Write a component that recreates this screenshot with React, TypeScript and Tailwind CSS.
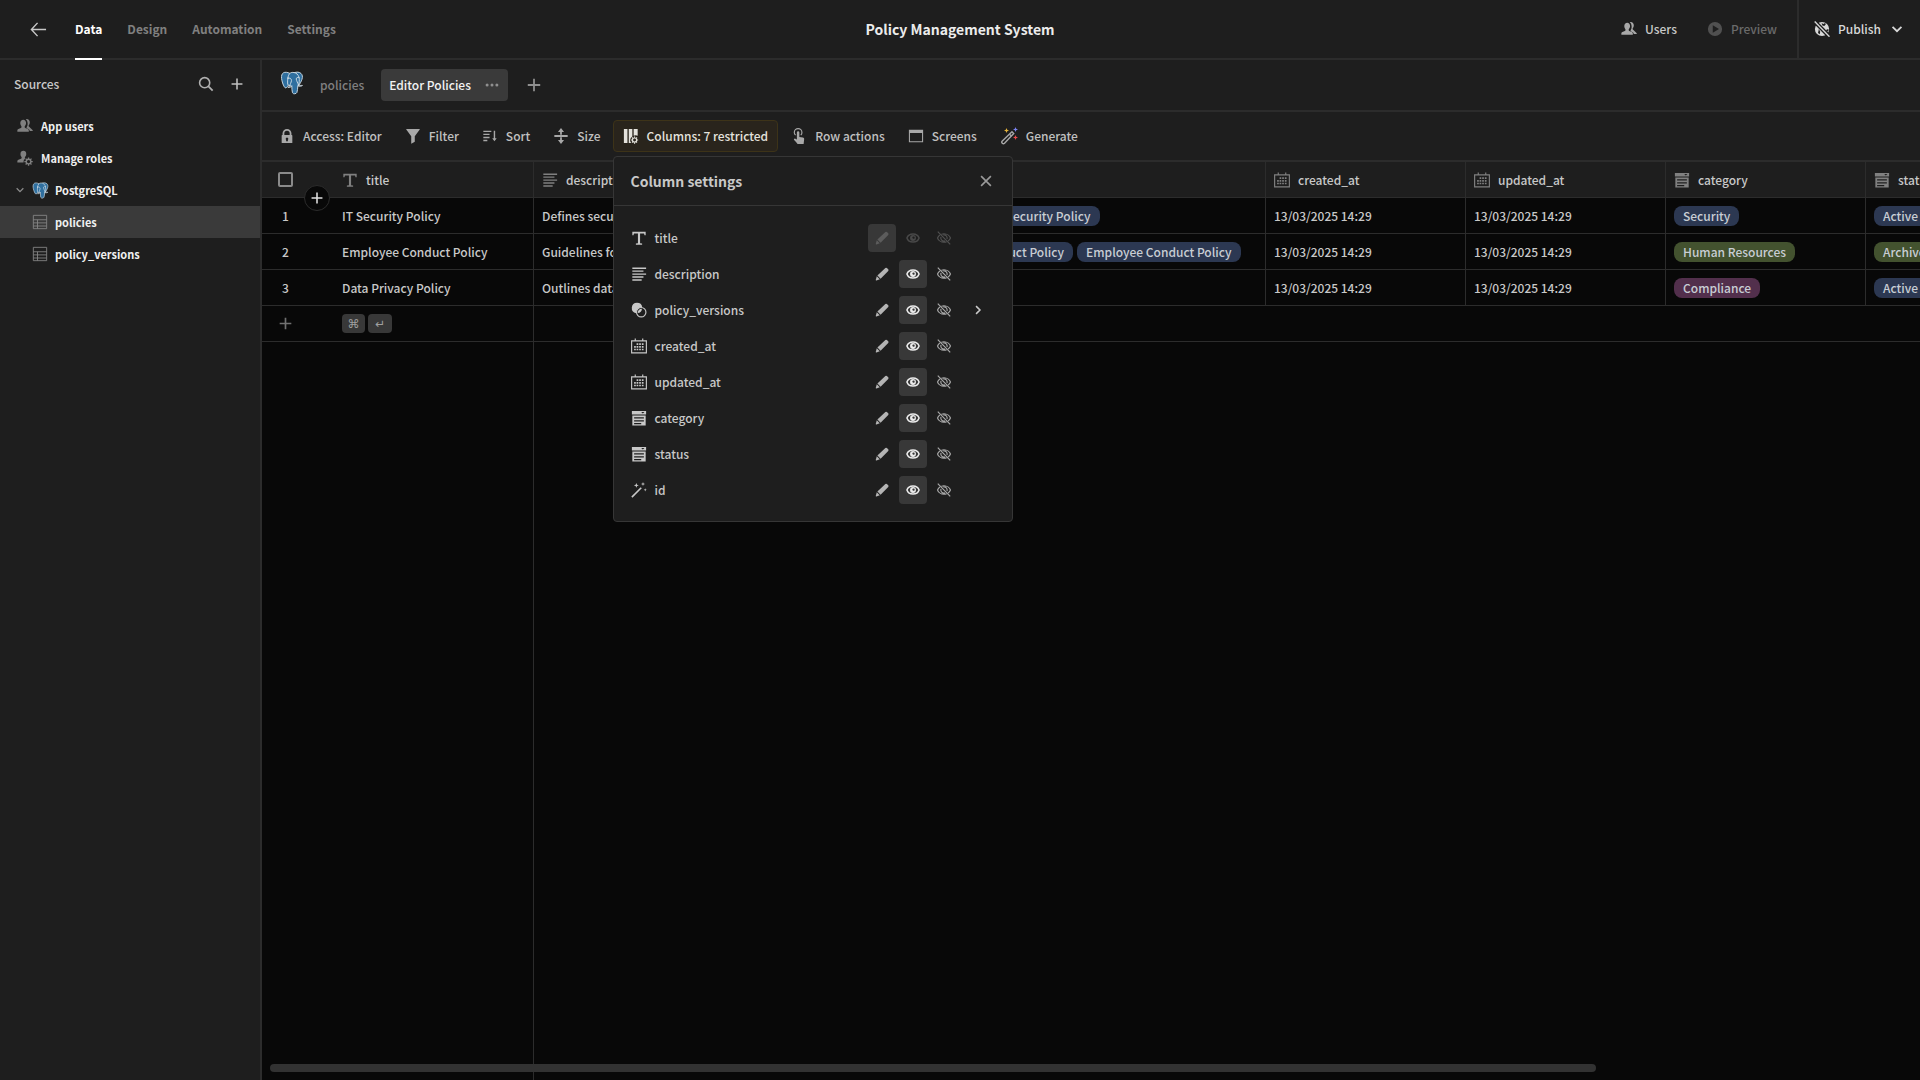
import type { ReactNode } from "react";

type IconProps = { className?: string; children: ReactNode };

function Svg({ className = "size-4", children }: IconProps) {
  return (
    <svg viewBox="0 0 18 18" fill="currentColor" aria-hidden="true" className={`shrink-0 ${className}`}>
      {children}
    </svg>
  );
}

type P = { className?: string };

const Users = ({ className }: P) => (
  <Svg className={className}>
    <path d="M7 2c1.900 0 3.200 1.500 3.200 3.700 0 1.500-.6 2.800-1.500 3.600v1c0 .4.3.7.7.9l2.700 1.100c.7.3 1.200.9 1.200 1.600V15.500H.4v-1.600c0-.7.5-1.300 1.200-1.600l2.700-1.100c.4-.2.7-.5.7-.9v-1C4.200 8.500 3.700 7.200 3.700 5.700 3.700 3.500 5.100 2 7 2z" />
    <path d="M9.800 1.200c2.600-.7 4.600.8 4.600 3.600 0 1.500-.5 2.700-1.300 3.500v1.100l4.600 4.400v.9h-3.300c-.1-1.200-.8-2-1.800-2.400l-1.800-.8v-1c.8-1 1.200-2.300 1.200-3.700 0-2.400-.8-4.400-2.200-5.600z" />
  </Svg>
);

const UserCog = ({ className }: P) => (
  <Svg className={className}>
    <path d="M7.200.8c1.900 0 3.200 1.400 3.200 3.600 0 1.500-.6 2.800-1.500 3.600v.9c0 .3 0 .5.2.6A5.500 5.500 0 0 0 7.300 14H.4v-1.400c0-.8.5-1.300 1.200-1.600l2.900-1.100c.4-.2.7-.5.7-.9V8C4.300 7.200 3.900 5.900 3.900 4.400 3.900 2.200 5.300.8 7.200.8z" />
    <circle cx="13" cy="13" r="2.600" fill="none" stroke="currentColor" strokeWidth="1.500" />
    <path d="M13 8.300v2M13 15.700v2M8.300 13h2M15.700 13h2M9.700 9.700l1.400 1.400M14.900 14.900l1.400 1.400M9.700 16.300l1.400-1.400M14.900 11.100l1.400-1.400" stroke="currentColor" strokeWidth="1.500" />
  </Svg>
);

const Chevron = ({ className }: P) => (
  <Svg className={className}>
    <path d="M4 6.500l5 5 5-5" fill="none" stroke="currentColor" strokeWidth="2" />
  </Svg>
);

const Plus = ({ className }: P) => (
  <Svg className={className}>
    <path d="M9 2v14M2 9h14" fill="none" stroke="currentColor" strokeWidth="2" />
  </Svg>
);

const Postgres = ({ className }: P) => (
  <svg viewBox="-1 -1 26 26" aria-hidden="true" className={`shrink-0 ${className}`}>
    <g fill="#2f6f9f" stroke="#cfdde6" strokeWidth="1" strokeLinejoin="round" strokeLinecap="round">
      <path d="M9.400 1.400C6.800.3 4.500 0 2.800.9 1 1.900.4 4.200.7 7c.4 3.200 1.600 7 3 9.200 1.100 1.600 2 1.400 3.300-.3l1.300-1.700z" />
      <path d="M14.500.8c2.700-1 5.500-.8 7.300.9 1.500 1.500 1.900 3.500 1 6.300-.7 2.200-2 4.700-3.600 6.600z" />
      <path d="M7.600 6.500C7.900 2.600 9.900.4 13 .5c3.500 0 5.900 2.500 6.700 5.600.4 2.800.2 5.600-.6 8.200l-.8 1c-.2 2.500-.3 5-1 7-.6 1.400-3.900 2.200-4.800.2-.7-2.200-.5-4.500-.7-7.200-1.800-.2-4-.6-4.500-2-.3-2.300 0-4.800.3-6.800z" />
      <path d="M18.400 15.200c1.500.5 3.600.5 4.900-.5-1.200-.2-2.700.3-4-.4M11.800 15.300c-1.200 1.800-3.200 1.600-4.300 1.500l2-1.300c-.1-1.600 2-4.200 1.900-6.300C11.300 7 9.500 6 7.600 7M19.700 6.100c-1.600-.4-3.200 0-3.100 1.600.2 2 1.700 4 2.300 6.300" fill="none" />
    </g>
  </svg>
);

const TableIcon = ({ className }: P) => (
  <Svg className={className}>
    <path d="M1.500 1.500h15v15h-15zM1.500 6.500h15M1.500 10h15M1.500 13.500h15M6.200 6.500v10" fill="none" stroke="currentColor" />
  </Svg>
);

const Lock = ({ className }: P) => (
  <Svg className={className}>
    <path fillRule="evenodd" d="M14.500 8H14V6A5 5 0 0 0 4 6v2h-.5a.5.500 0 0 0-.5.500v8a.5.500 0 0 0 .5.500h11a.5.500 0 0 0 .5-.5v-8a.5.500 0 0 0-.5-.5zM6 6a3 3 0 0 1 6 0v2H6zm4 7.300V15H8v-1.700a1.500 1.500 0 1 1 2 0z" />
  </Svg>
);

const Funnel = ({ className }: P) => (
  <Svg className={className}>
    <path d="M1.800 1h14.400a.5.500 0 0 1 .4.800L11 9.200v6.300l-3.400 2a.4.400 0 0 1-.6-.3V9.200L1.400 1.800A.5.500 0 0 1 1.800 1z" />
  </Svg>
);

const SortIcon = ({ className }: P) => (
  <Svg className={className}>
    <path d="M1.500 3.800h9M1.500 7.200h7M1.500 10.600h7M1.500 14h4.500M14 3v10" fill="none" stroke="currentColor" strokeWidth="1.600" />
    <path d="M11.500 11.500h5L14 15z" />
  </Svg>
);

const SizeIcon = ({ className }: P) => (
  <Svg className={className}>
    <path d="M1.500 9h15M9 4v3.500M9 10.500V14" fill="none" stroke="currentColor" strokeWidth="2" />
    <path d="M9 0l3.400 4.500H5.600zM9 18l3.400-4.500H5.600z" />
  </Svg>
);

const ColumnsCog = ({ className }: P) => (
  <Svg className={className}>
    <path d="M1 1h4v16H1zM6.500 1h4v8.500A5 5 0 0 0 8 13.500c0 1.500.5 2.600 1.400 3.500H6.500zM12 1h4.500v7.700a6 6 0 0 0-4.500 0z" />
    <circle cx="13" cy="13.500" r="2.300" fill="none" stroke="currentColor" strokeWidth="1.300" />
    <path d="M13 9.500v1.500M13 16v1.800M8.900 13.500h1.600M15.500 13.500H17M10.200 10.700l1.100 1.100M14.700 15.200l1.100 1.100M10.200 16.300l1.100-1.100M14.700 11.800l1.100-1.100" stroke="currentColor" strokeWidth="1.300" />
  </Svg>
);

const Tap = ({ className }: P) => (
  <Svg className={className}>
    <path d="M5.200 8A4 4 0 0 1 3.700 5a4.300 4.300 0 0 1 8.600 0 4 4 0 0 1-1.300 3" fill="none" stroke="currentColor" strokeWidth="1.300" />
    <path d="M6.600 5a1.400 1.400 0 0 1 2.800 0v5l4 .7c1 .2 1.500.9 1.400 1.900L14.200 18H7.400c-1-1.700-2.400-3.200-3.900-4.600-.7-.8.300-1.900 1.400-1.400l1.700 1z" />
  </Svg>
);

const WindowIcon = ({ className }: P) => (
  <Svg className={className}>
    <path fillRule="evenodd" d="M1 2h16v14H1zm1.200 3.500v9.300h13.600V5.500z" />
  </Svg>
);

const MagicWand = ({ className }: P) => (
  <Svg className={className}>
    <path d="M12 4.800l1.700 1.700-9.200 9.800a1.500 1.500 0 0 1-2.200-2.200z" fill="none" stroke="currentColor" strokeWidth="1.400" />
    <path d="M9.600 7.300l1.800 1.800" stroke="currentColor" strokeWidth="1.300" />
    <path d="M6.500 1l.7 1.800L9 3.500l-1.800.7-.7 1.800-.7-1.800L4 3.500l1.800-.7z" fill="#e5b43c" />
    <path d="M15.500 0l.7 1.800 1.800.7-1.800.7-.7 1.800-.7-1.800-1.800-.7 1.800-.7z" fill="#7b83f0" />
    <path d="M15.500 8l.7 1.800 1.800.7-1.800.7-.7 1.800-.7-1.800-1.800-.7 1.800-.7z" fill="#ea4b4b" />
  </Svg>
);

const TextIcon = ({ className }: P) => (
  <Svg className={className}>
    <path d="M1.500 2h15v4h-1.300l-.5-2H10.200v10.800l2.300.4V16.500h-7v-1.300l2.300-.4V4H3.300l-.5 2H1.500z" />
  </Svg>
);

const Lines = ({ className }: P) => (
  <Svg className={className}>
    <path d="M1.500 2.500H17M1.500 5.800h12.500M1.500 9.100H17M1.500 12.400h12.500M1.500 15.700h10.500" fill="none" stroke="currentColor" strokeWidth="1.600" />
  </Svg>
);

const Relation = ({ className }: P) => (
  <Svg className={className}>
    <path d="M6.800.8a6 6 0 0 0-1 11.900A6.600 6.600 0 0 1 12.700 5.800 6 6 0 0 0 6.800.8z" />
    <path d="M12.300 7.500A5 5 0 0 1 7.500 12.300 5 5 0 0 1 12.300 7.500z" />
    <circle cx="11.500" cy="11.500" r="5.300" fill="none" stroke="currentColor" strokeWidth="1.300" />
  </Svg>
);

const Calendar = ({ className }: P) => (
  <Svg className={className}>
    <path d="M.7 3.200h16.600v13.600H.7zM4.800.5v3.500M13.200.5v3.500" fill="none" stroke="currentColor" strokeWidth="1.300" />
    <path d="M6.300 6h1.900v1.900H6.300zM9.200 6h1.900v1.900H9.200zM12.200 6h1.900v1.900h-1.900zM3.500 9h1.900v1.900H3.500zM6.300 9h1.900v1.900H6.300zM9.200 9h1.900v1.900H9.200zM12.200 9h1.900v1.900h-1.900zM3.500 12h1.900v1.900H3.500zM6.300 12h1.900v1.900H6.300zM9.200 12h1.900v1.900H9.200zM12.200 12h1.900v1.900h-1.900z" />
  </Svg>
);

const Dropdown = ({ className }: P) => (
  <Svg className={className}>
    <path fillRule="evenodd" d="M1 1h16v4H1zm10.500 1.300L13.300 4l1.800-1.700zM1.500 6.300h15V17.500h-15zM3.500 8.200v1.400h11V8.200zm0 3.200v1.400h11v-1.400zm0 3.200V16h8v-1.400z" />
  </Svg>
);

const Wand = ({ className }: P) => (
  <Svg className={className}>
    <path d="M1 17L11.500 6.500" stroke="currentColor" strokeWidth="1.800" />
    <path d="M6 1l.8 2 2 .8-2 .8L6 6.600l-.8-2-2-.8 2-.8zM13.500 0l.6 1.700 1.700.6-1.700.6-.6 1.700-.6-1.700-1.700-.6 1.700-.6zM16 7l.5 1.300 1.300.5-1.300.5L16 10.600l-.5-1.300-1.300-.5 1.300-.5z" />
  </Svg>
);

const Pencil = ({ className }: P) => (
  <Svg className={className}>
    <path d="M13.300 1.300a1.500 1.500 0 0 1 2 0l1.700 1.700a1.500 1.500 0 0 1 0 2L7.200 15 3.100 10.900zM2.300 11.900l3.900 3.900-4.300 1.600c-.7.200-1.100-.2-.9-.9z" />
  </Svg>
);

const Eye = ({ className }: P) => (
  <Svg className={className}>
    <path d="M9 3.800c4 0 7 2.700 7.800 5.200-.8 2.500-3.800 5.200-7.800 5.200S2 11.500 1.200 9C2 6.500 5 3.800 9 3.800z" fill="none" stroke="currentColor" strokeWidth="1.900" />
    <path fillRule="evenodd" d="M9 5.200a3.800 3.800 0 1 1 0 7.600 3.800 3.800 0 0 1 0-7.600zM9.600 7a1.500 1.500 0 1 0 1.500 1.900A1.500 1.500 0 0 0 9.600 7z" />
  </Svg>
);

const EyeOff = ({ className }: P) => (
  <Svg className={className}>
    <path d="M5.800 4.100A9 9 0 0 1 9 3.500c4.200 0 7.500 3 8.300 5.500a8 8 0 0 1-3 3.900M12.200 14A9 9 0 0 1 9 14.500C4.800 14.500 1.500 11.500.7 9a8 8 0 0 1 3-3.900M5.200 7.500a4 4 0 0 0 5 5.200M8 5.200a4 4 0 0 1 4.800 5.100M1 .8l16 16.400" fill="none" stroke="currentColor" strokeWidth="1.500" />
  </Svg>
);

const GlobeOff = ({ className }: P) => (
  <Svg className={className}>
    <circle cx="9" cy="9" r="8" />
    <path d="M8.500 2.500L11 3.500 12.500 2l.7 2-1.700 1.500-2-.5zM13.500 10l2.500-1 .5 1.500-2 2zM5.500 9l1.500 3-.5 3-2-1.500z" fill="#1e1e1e" />
    <path d="M.2 0l17.600 18" stroke="#1e1e1e" strokeWidth="4.600" />
    <path d="M.8.600l16.600 17" stroke="currentColor" strokeWidth="1.600" />
  </Svg>
);

const COLUMNS = [
  { name: "title", Icon: TextIcon, width: "w-[200px]" },
  { name: "description", Icon: Lines, width: "w-[200px]" },
  { name: "policy_versions", Icon: Relation, width: "w-[532px]" },
  { name: "created_at", Icon: Calendar, width: "w-[200px]" },
  { name: "updated_at", Icon: Calendar, width: "w-[200px]" },
  { name: "category", Icon: Dropdown, width: "w-[200px]" },
  { name: "status", Icon: Dropdown, width: "w-[200px]" },
  { name: "id", Icon: Wand, width: "w-[200px]" },
];

const BLUE = "bg-[#2c3852]";
const GREEN = "bg-[#43522f]";
const PURPLE = "bg-[#522f4c]";

const ROWS = [
  { title: "IT Security Policy", description: "Defines security standards", versions: 3, category: "Security", catColor: BLUE, status: "Active", statusColor: BLUE },
  { title: "Employee Conduct Policy", description: "Guidelines for employee conduct", versions: 3, category: "Human Resources", catColor: GREEN, status: "Archived", statusColor: GREEN },
  { title: "Data Privacy Policy", description: "Outlines data handling rules", versions: 1, category: "Compliance", catColor: PURPLE, status: "Active", statusColor: BLUE },
];

function Tag({ color, children }: { color: string; children: ReactNode }) {
  return <span className={`flex h-5 shrink-0 items-center rounded-lg px-[9px] text-[#c8cdd4] ${color}`}>{children}</span>;
}

function Tool({ icon, label }: { icon: ReactNode; label: string }) {
  return (
    <button type="button" className="flex h-8 items-center gap-2 rounded px-2.5 whitespace-nowrap text-[#c0c0c0]">
      <span className="flex text-[#a8a8a8]">{icon}</span>
      {label}
    </button>
  );
}

const CELL = "border-b border-[#2c2c2c] p-0";

function ColumnSettings() {
  return (
    <div role="dialog" aria-label="Column settings" className="absolute top-full left-0 z-20 mt-1 w-[400px] rounded border border-[#363636] bg-[#1e1e1e] text-[#c8c8c8]">
      <div className="flex h-[49px] items-center justify-between border-b border-[#363636] pr-[18px] pl-[17px]">
        <h2 className="text-sm font-bold">Column settings</h2>
        <button type="button" aria-label="Close" className="text-[#9a9a9a]">
          <Svg className="size-4"><path d="M3.500 3.500l11 11M14.500 3.500l-11 11" stroke="currentColor" strokeWidth="1.800" /></Svg>
        </button>
      </div>
      <ul className="pt-3.5 pr-5 pb-[13px] pl-[17px]">
        {COLUMNS.map(({ name, Icon }, i) => (
          <li key={name} className="flex h-9 items-center gap-2">
            <Icon className="size-4" />
            <span className="flex-1">{name}</span>
            <span className="flex gap-[3px]">
              <button type="button" aria-label={`${name}: editable`} aria-pressed={i === 0} disabled={i === 0} className={`flex size-7 items-center justify-center rounded ${i === 0 ? "bg-[#383838] text-[#5c5c5c]" : "text-[#b4b4b4]"}`}>
                <Pencil className="size-3.5" />
              </button>
              <button type="button" aria-label={`${name}: read only`} aria-pressed={i !== 0} disabled={i === 0} className={`flex size-7 items-center justify-center rounded ${i === 0 ? "text-[#484848]" : "bg-[#383838] text-[#ececec]"}`}>
                <Eye className="size-3.5" />
              </button>
              <button type="button" aria-label={`${name}: hidden`} aria-pressed={false} disabled={i === 0} className={`flex size-7 items-center justify-center rounded ${i === 0 ? "text-[#505050]" : "text-[#a8a8a8]"}`}>
                <EyeOff className="size-3.5" />
              </button>
            </span>
            {name === "policy_versions" ? (
              <button type="button" aria-label="Expand policy_versions" className="-ml-0.5 flex size-7 items-center justify-center">
                <Chevron className="size-3.5 -rotate-90" />
              </button>
            ) : (
              <span className="-ml-0.5 w-7" />
            )}
          </li>
        ))}
      </ul>
    </div>
  );
}

export default function App() {
  return (
    <div className="flex h-screen flex-col overflow-hidden bg-[#1e1e1e] font-['Noto_Sans_CJK_SC','Noto_Sans',sans-serif] text-xs font-medium text-[#c8c8c8]">
      <header className="grid h-[60px] shrink-0 grid-cols-[1fr_auto_1fr] border-b-2 border-[#2c2c2c]">
        <div className="flex items-center">
          <button type="button" aria-label="Back" className="mr-7 ml-[30px]">
            <Svg className="size-[17px]"><path d="M17 9H1.500M8 2L1.500 9 8 16" fill="none" stroke="currentColor" strokeWidth="1.500" /></Svg>
          </button>
          <nav className="-mb-0.5 flex h-[60px] gap-[25px] self-start font-bold text-[#808080]">
            <a href="#data" className="flex items-center border-b-2 border-white text-white">Data</a>
            <a href="#design" className="flex items-center border-b-2 border-transparent">Design</a>
            <a href="#automation" className="flex items-center border-b-2 border-transparent">Automation</a>
            <a href="#settings" className="flex items-center border-b-2 border-transparent">Settings</a>
          </nav>
        </div>
        <h1 className="flex items-center text-sm font-bold text-[#ececec]">Policy Management System</h1>
        <div className="flex items-center justify-end">
          <button type="button" className="mr-[30px] flex items-center gap-2"><Users className="size-4 text-[#a8a8a8]" />Users</button>
          <button type="button" disabled className="mr-5 flex items-center gap-2 text-[#6a6a6a]">
            <Svg className="size-4 text-[#505050]"><path fillRule="evenodd" d="M9 1a8 8 0 1 0 0 16A8 8 0 0 0 9 1zM6.500 4.800L13.500 9l-7 4.200z" /></Svg>
            Preview
          </button>
          <button type="button" className="flex h-full items-center gap-2 border-l-2 border-[#2c2c2c] pr-[15px] pl-[15px] text-[#d8d8d8]">
            <GlobeOff />
            Publish
            <Chevron />
          </button>
        </div>
      </header>

      <div className="flex min-h-0 flex-1">
        <aside className="w-[262px] shrink-0 border-r-2 border-[#2c2c2c]">
          <div className="flex h-[50px] items-center pr-4 pb-0.5 pl-3.5">
            <h2 className="flex-1">Sources</h2>
            <button type="button" aria-label="Search" className="mr-4 text-[#b0b0b0]">
              <Svg><circle cx="7.500" cy="7.500" r="5.700" fill="none" stroke="currentColor" strokeWidth="1.800" /><path d="M11.500 11.500l5 5" stroke="currentColor" strokeWidth="2" /></Svg>
            </button>
            <button type="button" aria-label="Add source" className="text-[#c0c0c0]"><Plus className="size-[14px]" /></button>
          </div>
          <nav className="text-[11px] font-bold text-[#f0f0f0]">
            <a href="#users" className="flex h-8 items-center gap-2 pl-[17px]"><Users className="size-4 text-[#808080]" />App users</a>
            <a href="#roles" className="flex h-8 items-center gap-2 pl-[17px]"><UserCog className="size-4 text-[#808080]" />Manage roles</a>
            <a href="#postgres" className="flex h-8 items-center gap-1.5 pl-3.5"><Chevron className="size-3 text-[#8a8a8a]" /><Postgres className="size-[17px]" />PostgreSQL</a>
            <a href="#policies" aria-current="page" className="flex h-8 items-center gap-[7px] bg-[#3a3a3a] pl-8"><TableIcon className="size-4 text-[#858585]" />policies</a>
            <a href="#policy-versions" className="flex h-8 items-center gap-[7px] pl-8"><TableIcon className="size-4 text-[#858585]" />policy_versions</a>
          </nav>
        </aside>

        <main className="flex min-w-0 flex-1 flex-col">
          <div className="flex h-[52px] shrink-0 items-center border-b-2 border-[#2c2c2c] pl-[18px]">
            <Postgres className="mb-1 size-6" />
            <a href="#policies" className="ml-4 text-[#808080]">policies</a>
            <div className="ml-[17px] flex h-8 items-center rounded bg-[#3a3a3a] px-2 text-[#f2f2f2]">
              <a href="#editor-policies">Editor Policies</a>
              <button type="button" aria-label="View options" className="ml-[13px] text-[#8f8f8f]">
                <Svg><circle cx="3.500" cy="9" r="1.700" /><circle cx="9" cy="9" r="1.700" /><circle cx="14.500" cy="9" r="1.700" /></Svg>
              </button>
            </div>
            <button type="button" aria-label="Add view" className="ml-[18px] text-[#8f8f8f]"><Plus className="size-4" /></button>
          </div>

          <div className="flex h-[50px] shrink-0 items-center gap-[3px] border-b-2 border-[#2c2c2c] pl-[7px]">
            <Tool icon={<Lock className="size-4" />} label="Access: Editor" />
            <Tool icon={<Funnel className="size-4" />} label="Filter" />
            <Tool icon={<SortIcon className="size-4" />} label="Sort" />
            <Tool icon={<SizeIcon className="size-4" />} label="Size" />
            <div className="relative -ml-px">
              <button type="button" aria-expanded="true" className="flex h-8 items-center gap-2 rounded border border-[#3d3318] bg-[#29241c] px-[9px] whitespace-nowrap text-[#e4e2dc]">
                <ColumnsCog className="size-4" />
                Columns: 7 restricted
              </button>
              <ColumnSettings />
            </div>
            <Tool icon={<Tap className="size-4" />} label="Row actions" />
            <Tool icon={<WindowIcon className="size-4" />} label="Screens" />
            <Tool icon={<MagicWand className="size-[18px]" />} label="Generate" />
          </div>

          <div className="relative min-h-0 flex-1 overflow-hidden bg-[#080808]">
            <table className="h-full w-[2004px] table-fixed border-separate border-spacing-0 text-left whitespace-nowrap">
              <thead>
                <tr className="h-9 bg-[#1e1e1e]">
                  <th className={`${CELL} w-[72px]`}>
                    <input type="checkbox" aria-label="Select all rows" className="ml-4 block size-[15px] appearance-none rounded-[2px] border-2 border-[#8a8a8a]" />
                  </th>
                  {COLUMNS.map(({ name, Icon, width }) => (
                    <th key={name} className={`${CELL} ${width} border-r font-medium`}>
                      <span className="flex items-center gap-2 pl-2"><Icon className="size-4 text-[#808080]" />{name}</span>
                    </th>
                  ))}
                </tr>
              </thead>
              <tbody>
                {ROWS.map((r, i) => (
                  <tr key={r.title} className="h-9">
                    <td className={CELL}><span className="ml-4 block w-[15px] text-center">{i + 1}</span></td>
                    <td className={`${CELL} border-r`}><span className="block pl-2">{r.title}</span></td>
                    <td className={`${CELL} overflow-hidden border-r`}><span className="block truncate px-2">{r.description}</span></td>
                    <td className={`${CELL} border-r`}>
                      <span className="flex gap-1 pl-2">
                        {Array.from({ length: r.versions }, (_, k) => <Tag key={k} color={BLUE}>{r.title}</Tag>)}
                      </span>
                    </td>
                    <td className={`${CELL} border-r`}><span className="block pl-2">13/03/2025 14:29</span></td>
                    <td className={`${CELL} border-r`}><span className="block pl-2">13/03/2025 14:29</span></td>
                    <td className={`${CELL} border-r`}><span className="flex pl-2"><Tag color={r.catColor}>{r.category}</Tag></span></td>
                    <td className={`${CELL} border-r`}><span className="flex pl-2"><Tag color={r.statusColor}>{r.status}</Tag></span></td>
                    <td className={`${CELL} border-r`} />
                  </tr>
                ))}
                <tr className="h-9">
                  <td className={CELL}>
                    <button type="button" aria-label="Add row" className="ml-4 block text-[#707070]"><Plus className="size-[15px]" /></button>
                  </td>
                  <td className={`${CELL} border-r`}>
                    <span className="flex gap-[3px] pl-2 font-['DejaVu_Sans',sans-serif] text-[#a0a0a0]">
                      <kbd className="flex h-[19px] w-[23px] items-center justify-center rounded bg-[#383838] font-[inherit]">⌘</kbd>
                      <kbd className="flex h-[19px] w-6 items-center justify-center rounded bg-[#383838] font-[inherit]">↵</kbd>
                    </span>
                  </td>
                  <td colSpan={7} className={CELL} />
                </tr>
                <tr>
                  <td />
                  <td className="border-r border-[#2c2c2c]" />
                  <td colSpan={7} />
                </tr>
              </tbody>
            </table>
            <button type="button" aria-label="Insert row" className="absolute top-[23px] left-[42px] flex size-[26px] items-center justify-center rounded-full border border-[#2c2c2c] bg-[#080808] text-[#e0e0e0]">
              <Plus className="size-3.5" />
            </button>
            <div className="absolute bottom-2 left-2 h-2 w-4/5 rounded bg-[#323232]" />
          </div>
        </main>
      </div>
    </div>
  );
}
